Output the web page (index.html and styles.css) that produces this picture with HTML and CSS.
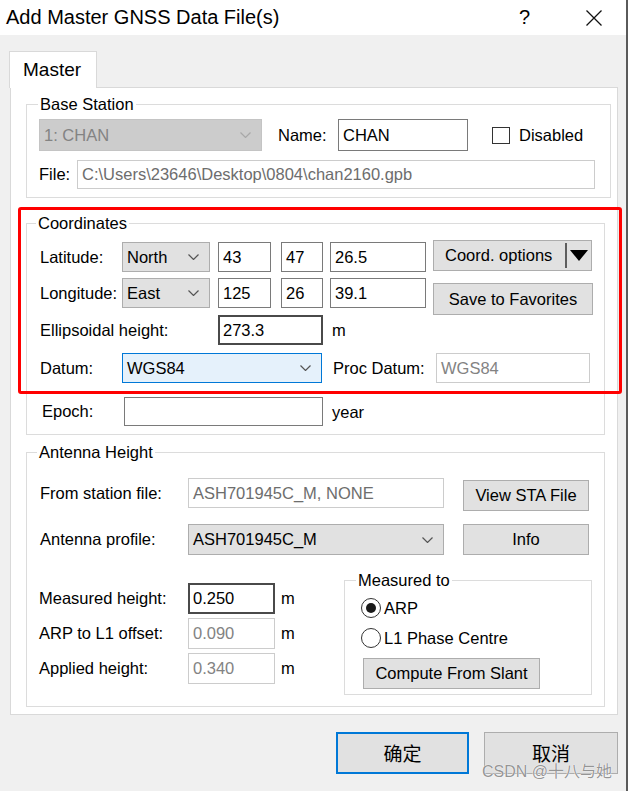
FILE: index.html
```html
<!DOCTYPE html>
<html lang="en">
<head>
<meta charset="utf-8">
<title>Add Master GNSS Data File(s)</title>
<link rel="stylesheet" href="styles.css">
</head>
<body>
<div class="window">
  <div class="titlebar">
    <span class="title">Add Master GNSS Data File(s)</span>
    <span class="help">?</span>
    <svg class="close" width="16" height="16" viewBox="0 0 16 16"><path d="M0.5 0.5L15.5 15.5M15.5 0.5L0.5 15.5" stroke="#111" stroke-width="1.3" fill="none"/></svg>
  </div>

  <div class="tabstrip"><div class="tab">Master</div></div>

  <div class="panel">
    <fieldset class="group g-base">
      <legend>Base Station</legend>
      <div class="row base-r1">
        <div class="cb cb-dis base-combo"><span>1: CHAN</span><svg class="chev" width="11" height="6" viewBox="0 0 11 6"><polyline points="0.5,0.5 5.5,5.5 10.5,0.5"/></svg></div>
        <span class="lbl name-lbl">Name:</span>
        <div class="tb name-tb">CHAN</div>
        <span class="chk"></span>
        <span class="lbl chk-lbl">Disabled</span>
      </div>
      <div class="row base-r2">
        <span class="lbl file-lbl">File:</span>
        <div class="tb tb-dis file-tb">C:\Users\23646\Desktop\0804\chan2160.gpb</div>
      </div>
    </fieldset>

    <fieldset class="group g-coord">
      <legend>Coordinates</legend>
      <div class="row lat-row">
        <span class="lbl dir-lbl">Latitude:</span>
        <div class="cb dir-combo"><span>North</span><svg class="chev" width="11" height="6" viewBox="0 0 11 6"><polyline points="0.5,0.5 5.5,5.5 10.5,0.5"/></svg></div>
        <div class="tb deg-tb">43</div>
        <div class="tb min-tb">47</div>
        <div class="tb sec-tb">26.5</div>
        <div class="btn opt-btn"><span>Coord. options</span><span class="sep"></span><svg width="18" height="11" viewBox="0 0 18 11"><path d="M0 0H18L9 11Z" fill="#000"/></svg></div>
      </div>
      <div class="row lon-row">
        <span class="lbl dir-lbl">Longitude:</span>
        <div class="cb dir-combo"><span>East</span><svg class="chev" width="11" height="6" viewBox="0 0 11 6"><polyline points="0.5,0.5 5.5,5.5 10.5,0.5"/></svg></div>
        <div class="tb deg-tb">125</div>
        <div class="tb min-tb">26</div>
        <div class="tb sec-tb">39.1</div>
        <div class="btn fav-btn">Save to Favorites</div>
      </div>
      <div class="row ell-row">
        <span class="lbl ell-lbl">Ellipsoidal height:</span>
        <div class="tb tb-focus ell-tb">273.3</div>
        <span class="lbl unit">m</span>
      </div>
      <div class="row datum-row">
        <span class="lbl dir-lbl">Datum:</span>
        <div class="cb cb-sel datum-combo"><span>WGS84</span><svg class="chev" width="11" height="6" viewBox="0 0 11 6"><polyline points="0.5,0.5 5.5,5.5 10.5,0.5"/></svg></div>
        <span class="lbl proc-lbl">Proc Datum:</span>
        <div class="tb tb-dis proc-tb">WGS84</div>
      </div>
      <div class="row epoch-row">
        <span class="lbl epoch-lbl">Epoch:</span>
        <div class="tb epoch-tb"></div>
        <span class="lbl unit">year</span>
      </div>
    </fieldset>

    <fieldset class="group g-ant">
      <legend>Antenna Height</legend>
      <div class="row sta-row">
        <span class="lbl ant-lbl">From station file:</span>
        <div class="tb tb-dis ant-wide">ASH701945C_M, NONE</div>
        <div class="btn ant-btn sta-btn">View STA File</div>
      </div>
      <div class="row prof-row">
        <span class="lbl ant-lbl">Antenna profile:</span>
        <div class="cb ant-wide prof-combo"><span>ASH701945C_M</span><svg class="chev" width="11" height="6" viewBox="0 0 11 6"><polyline points="0.5,0.5 5.5,5.5 10.5,0.5"/></svg></div>
        <div class="btn ant-btn prof-btn">Info</div>
      </div>
      <div class="lower">
        <div class="heights">
          <div class="row h-row">
            <span class="lbl h-lbl">Measured height:</span>
            <div class="tb tb-focus h-tb">0.250</div>
            <span class="lbl h-unit">m</span>
          </div>
          <div class="row h-row">
            <span class="lbl h-lbl">ARP to L1 offset:</span>
            <div class="tb tb-dis h-tb">0.090</div>
            <span class="lbl h-unit">m</span>
          </div>
          <div class="row h-row">
            <span class="lbl h-lbl">Applied height:</span>
            <div class="tb tb-dis h-tb">0.340</div>
            <span class="lbl h-unit">m</span>
          </div>
        </div>
        <fieldset class="group g-meas">
          <legend>Measured to</legend>
          <div class="radio-row arp"><span class="radio on"></span><span class="lbl">ARP</span></div>
          <div class="radio-row l1"><span class="radio"></span><span class="lbl">L1 Phase Centre</span></div>
          <div class="btn slant-btn">Compute From Slant</div>
        </fieldset>
      </div>
    </fieldset>
  </div>

  <div class="actions">
    <div class="btn dlg-btn default"><span class="dlg-txt">确定</span></div>
    <div class="btn dlg-btn"><span class="dlg-txt">取消</span></div>
  </div>
</div>
<div class="annot"></div>
<div class="watermark">CSDN @十八与她</div>
</body>
</html>
```

FILE: styles.css
```css
html {
  background: #ffffff;
}
body {
  margin: 0;
  width: 628px;
  height: 791px;
  border-right: 2px solid #5a5a5a;
  background: #f0f0f0;
  position: relative;
  overflow: hidden;
  font-family: "Liberation Sans", Arial, "Noto Sans CJK SC", sans-serif;
  font-size: 16.5px;
  color: #000;
}
*, *::before, *::after {
  box-sizing: border-box;
}

/* title bar */
.titlebar {
  height: 35px;
  background: #fff;
  display: flex;
  align-items: center;
  padding-left: 6px;
}
.title {
  font-size: 20px;
  flex: 1;
  color: #000;
}
.help {
  font-size: 20px;
  width: 11px;
  margin-right: 56px;
}
.close {
  display: block;
  margin-right: 24px;
}

/* tab */
.tabstrip {
  margin-top: 16px;
  padding-left: 9px;
  display: flex;
}
.tab {
  position: relative;
  z-index: 1;
  width: 88px;
  height: 37px;
  margin-bottom: -1px;
  background: #fff;
  border: 1px solid #d9d9d9;
  border-bottom: none;
  padding-left: 13px;
  font-size: 19px;
  line-height: 35px;
}
.panel {
  margin-left: 10px;
  width: 608px;
  height: 628px;
  background: #fff;
  border: 1px solid #d9d9d9;
}

/* group boxes */
.group {
  border: 1px solid #dcdcdc;
  margin: 0;
  min-width: 0;
}
.group legend {
  padding: 0 2px;
  line-height: 18px;
  font-size: 16.5px;
}
.g-base {
  margin: 7px 0 0 15px;
  width: 585px;
  padding: 6px 12px 8px 12px;
}
.g-base legend { margin-left: -1px; }
.g-coord {
  margin: 16px 0 0 15px;
  width: 579px;
  padding: 8px 13px 7px 13px;
}
.g-coord legend { margin-left: -4px; }
.g-ant {
  margin: 8px 0 0 15px;
  width: 579px;
  padding: 17px 11px 11px 13px;
}
.g-ant legend { margin-left: -3px; }

.row {
  display: flex;
  align-items: flex-start;
}
.lbl {
  white-space: nowrap;
  flex: none;
}

/* generic controls */
.tb {
  flex: none;
  height: 30px;
  line-height: 28px;
  background: #fff;
  border: 1px solid #7a7a7a;
  padding: 0 4px;
  white-space: nowrap;
  overflow: hidden;
}
.tb-focus {
  border: 2px solid #4a4a4a;
  line-height: 26px;
  padding: 0 3px;
}
.tb-dis {
  border-color: #cccccc;
  color: #6d6d6d;
}
.cb {
  flex: none;
  height: 30px;
  display: flex;
  align-items: center;
  justify-content: space-between;
  background: #e1e1e1;
  border: 1px solid #adadad;
  padding: 0 10px 0 4px;
  white-space: nowrap;
}
.chev {
  display: block;
  flex: none;
}
.chev polyline {
  fill: none;
  stroke: #555;
  stroke-width: 1.2;
}
.cb-dis {
  background: #cccccc;
  border-color: #c4c4c4;
  color: #838383;
}
.cb-dis .chev polyline { stroke: #a8a8a8; }
.cb-sel {
  background: #e5f1fb;
  border-color: #0078d7;
}
.btn {
  flex: none;
  height: 31px;
  background: #e1e1e1;
  border: 1px solid #adadad;
  display: flex;
  align-items: center;
  justify-content: center;
  white-space: nowrap;
}

/* base station */
.base-r1 { height: 32px; align-items: center; }
.base-combo { width: 223px; height: 32px; }
.name-lbl { margin-left: 16px; width: 60px; }
.name-tb { width: 130px; height: 32px; line-height: 30px; }
.chk {
  flex: none;
  margin-left: 24px;
  width: 18px;
  height: 17px;
  border: 1px solid #333;
  background: #fff;
}
.chk-lbl { margin-left: 9px; }
.base-r2 { margin-top: 9px; align-items: center; }
.file-lbl { width: 38px; }
.file-tb { width: 518px; height: 29px; line-height: 27px; }

/* coordinates */
.dir-lbl { width: 82px; line-height: 30px; }
.lat-row .dir-lbl, .lat-row .tb, .lat-row .cb { margin-top: 2px; }
.dir-combo { width: 88px; }
.deg-tb { width: 53px; margin-left: 8px; }
.min-tb { width: 42px; margin-left: 10px; }
.sec-tb { width: 96px; margin-left: 7px; }
.opt-btn {
  width: 159px;
  margin-left: 7px;
  justify-content: flex-start;
  padding: 0 3px 0 11px;
}
.opt-btn .sep {
  margin-left: auto;
  margin-right: 3px;
  width: 2px;
  height: 25px;
  background: #5e5e5e;
}
.opt-btn svg { display: block; }
.lon-row { margin-top: 6px; }
.fav-btn { width: 160px; height: 32px; margin-left: 7px; margin-top: 5px; }
.ell-lbl { width: 178px; line-height: 30px; }
.ell-tb { width: 105px; }
.unit { margin-left: 9px; line-height: 30px; }
.datum-row { margin-top: 8px; }
.datum-combo { width: 200px; }
.proc-lbl { margin-left: 11px; width: 103px; line-height: 30px; }
.proc-tb { width: 154px; color: #838383; }
.epoch-row { margin-top: 14px; }
.epoch-lbl { width: 84px; padding-left: 2px; line-height: 29px; }
.epoch-tb { width: 199px; height: 29px; }

/* antenna */
.ant-lbl { width: 148px; line-height: 30px; }
.ant-wide { width: 256px; }
.ant-btn { width: 126px; margin-left: 19px; }
.sta-btn { margin-top: 2px; }
.prof-row { margin-top: 13px; }
.prof-row .ant-lbl { line-height: 31px; }
.prof-combo { height: 31px; }
.lower {
  display: flex;
  align-items: flex-start;
  margin-top: 16px;
}
.heights {
  width: 304px;
  margin-top: 12px;
  display: flex;
  flex-direction: column;
  gap: 4px;
}
.h-lbl { width: 149px; line-height: 31px; margin-left: -1px; }
.h-tb { width: 87px; height: 31px; line-height: 29px; }
.h-tb.tb-focus { line-height: 27px; }
.h-tb.tb-dis { color: #838383; }
.h-unit { margin-left: 6px; line-height: 31px; }
.g-meas {
  width: 248px;
  padding: 8px 12px 5px 12px;
}
.g-meas legend { margin-left: -1px; }
.radio-row {
  display: flex;
  align-items: center;
  height: 22px;
  padding-left: 4px;
}
.radio-row.l1 { margin-top: 8px; }
.radio {
  flex: none;
  width: 20px;
  height: 20px;
  border: 1.5px solid #333;
  border-radius: 50%;
  background: #fff;
  display: flex;
  align-items: center;
  justify-content: center;
  margin-right: 3px;
}
.radio.on::after {
  content: "";
  width: 10px;
  height: 10px;
  border-radius: 50%;
  background: #1a1a1a;
}
.slant-btn {
  width: 177px;
  margin-left: 6px;
  margin-top: 9px;
}

/* dialog buttons */
.actions {
  margin-top: 17px;
  display: flex;
  justify-content: flex-end;
  gap: 15px;
  padding-right: 8px;
}
.dlg-btn {
  width: 134px;
  height: 42px;
  align-items: flex-start;
  padding-top: 10px;
}
.dlg-txt {
  font-family: "Noto Sans CJK SC", "Liberation Sans", sans-serif;
  font-size: 19px;
  line-height: 19px;
}
.dlg-btn.default {
  width: 133px;
  border: 2px solid #0078d7;
  padding-top: 9px;
}

/* overlays */
.annot {
  position: absolute;
  left: 18px;
  top: 207px;
  width: 604px;
  height: 187px;
  border: 3px solid #ff0000;
  border-radius: 3px;
  pointer-events: none;
}
.watermark {
  position: absolute;
  left: 482px;
  top: 764px;
  font-family: "Liberation Sans", "Noto Sans CJK SC", sans-serif;
  font-size: 16px;
  line-height: 16px;
  color: rgba(130, 130, 130, 0.85);
  text-shadow: 0 0 1px #fff, 0 0 1px #fff;
  white-space: nowrap;
}
```
